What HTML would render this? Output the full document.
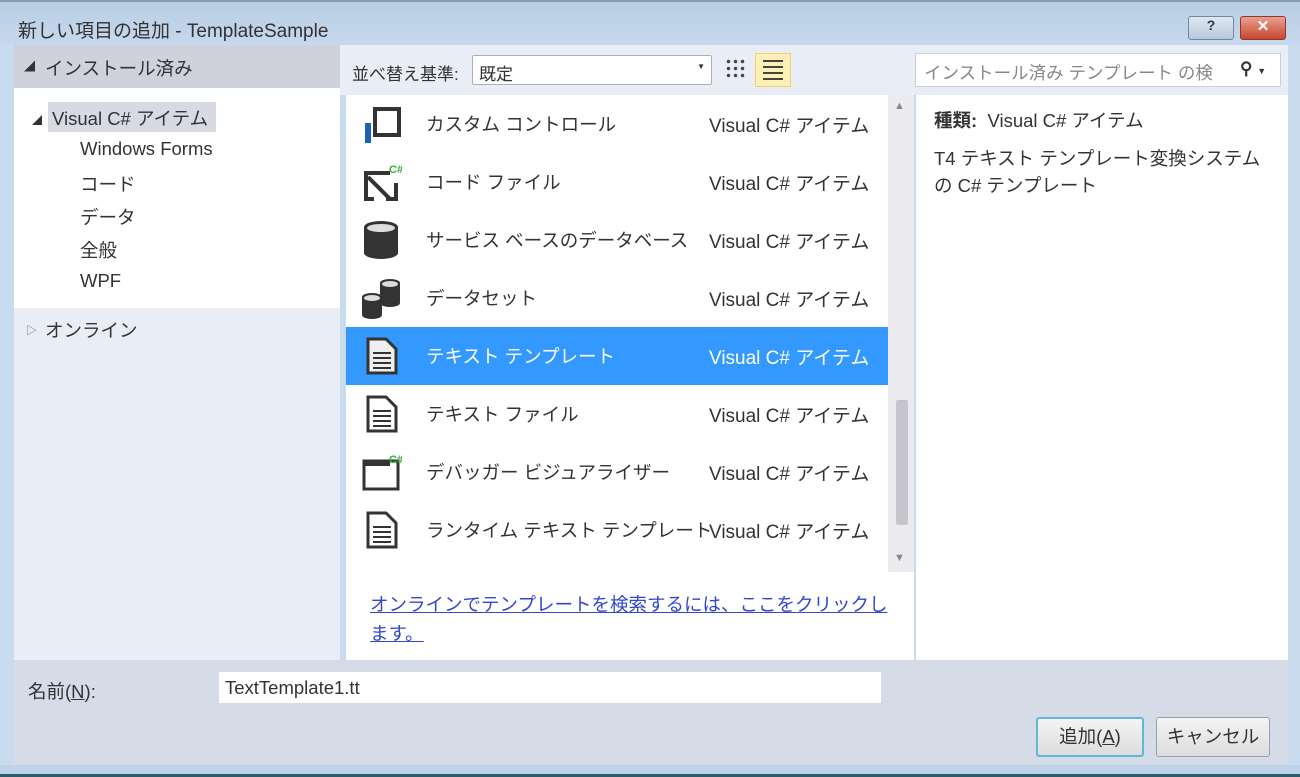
<!DOCTYPE html>
<html><head><meta charset="utf-8"><style>
*{margin:0;padding:0;box-sizing:border-box}
body{width:1300px;height:777px;overflow:hidden;background:#c9dbee;font-family:"Liberation Sans","Noto Sans CJK JP",sans-serif;font-size:18.5px;color:#333;position:relative}
.a{position:absolute}
.row{position:absolute;left:346px;width:542px;height:58px}
.row .n{position:absolute;left:80px;top:16px;white-space:nowrap}
.row .t{position:absolute;left:363px;top:16px;white-space:nowrap;font-size:19px}
.row svg{position:absolute;left:14px;top:8px}
.sel{background:#3399ff;color:#fff}
.tree{position:absolute;white-space:nowrap}
</style></head><body>
<div class="a" style="left:0;top:0;width:1300px;height:45px;background:linear-gradient(#b8cde4,#c6d8ec)"></div>
<div class="a" style="left:0;top:0;width:1300px;height:2px;background:#8a9aab"></div>
<div class="a" style="left:18px;top:16px;font-size:19px;color:#333">新しい項目の追加 - TemplateSample</div>
<div class="a" style="left:1188px;top:16px;width:46px;height:24px;border:1px solid #6f88a6;border-radius:3px;background:linear-gradient(#dfe8f2,#b7c8db);text-align:center;font-size:14px;font-weight:bold;color:#334">?</div>
<div class="a" style="left:1240px;top:16px;width:46px;height:24px;border:1px solid #8a3a30;border-radius:3px;background:linear-gradient(#e8a090,#c8462f);text-align:center;font-size:15px;font-weight:bold;color:#fff">✕</div>
<!-- left pane -->
<div class="a" style="left:14px;top:45px;width:326px;height:615px;background:#e9edf6"></div>
<div class="a" style="left:14px;top:45px;width:326px;height:43px;background:#cfd2dd"></div>
<div class="a" style="left:24px;top:58px;font-size:11px">◢</div>
<div class="a" style="left:45px;top:55px">インストール済み</div>
<div class="a" style="left:14px;top:88px;width:326px;height:220px;background:#fff"></div>
<div class="a" style="left:48px;top:102px;width:168px;height:30px;background:#d7d9e3"></div>
<div class="a" style="left:32px;top:112px;font-size:10px">◢</div>
<div class="tree" style="left:52px;top:105px">Visual C# アイテム</div>
<div class="tree" style="left:80px;top:138px">Windows Forms</div>
<div class="tree" style="left:80px;top:171px">コード</div>
<div class="tree" style="left:80px;top:204px">データ</div>
<div class="tree" style="left:80px;top:237px">全般</div>
<div class="tree" style="left:80px;top:270px">WPF</div>
<div class="a" style="left:26px;top:322px;font-size:11px;color:#777">▷</div>
<div class="tree" style="left:45px;top:317px">オンライン</div>
<!-- middle -->
<div class="a" style="left:340px;top:45px;width:576px;height:50px;background:#e9edf6"></div>
<div class="a" style="left:352px;top:60px;font-size:17px">並べ替え基準:</div>
<div class="a" style="left:472px;top:55px;width:240px;height:30px;background:#fff;border:1px solid #a8b0c0;border-radius:2px;padding:4px 6px;font-size:17px">既定<span style="position:absolute;right:6px;top:6px;font-size:8px">▼</span></div>
<div class="a" style="left:725px;top:58px;width:22px;height:22px;background:radial-gradient(circle,#444 1.5px,transparent 2px) 0 0/7px 7px"></div>
<div class="a" style="left:755px;top:53px;width:36px;height:34px;background:#fdf0b5;border:1px solid #f0d070"></div>
<div class="a" style="left:763px;top:60px;width:20px;height:20px;background:repeating-linear-gradient(#444 0 2px,transparent 2px 6px)"></div>
<div class="a" style="left:346px;top:95px;width:568px;height:565px;background:#fff"></div>
<div class="a" style="left:888px;top:95px;width:26px;height:477px;background:#ececf0"></div>
<div class="a" style="left:896px;top:400px;width:12px;height:125px;background:#c4c6cc;border-radius:2px"></div>
<div class="a" style="left:894px;top:100px;font-size:11px;color:#888">▲</div>
<div class="a" style="left:894px;top:552px;font-size:11px;color:#888">▼</div>

<div class="row" style="top:95px"><svg width="42" height="42"><rect x="15" y="6" width="24" height="26" fill="none" stroke="#333" stroke-width="4"/><rect x="5" y="20" width="6" height="20" fill="#1f5fb8"/></svg><span class="n">カスタム コントロール</span><span class="t">Visual C# アイテム</span></div>
<div class="row" style="top:153px"><svg width="42" height="42"><path d="M4 12h26M6 12v26h8M26 38h10v-16M8 16l22 22" fill="none" stroke="#333" stroke-width="4"/><text x="29" y="12" font-size="11" font-weight="bold" fill="#3a3">C#</text></svg><span class="n">コード ファイル</span><span class="t">Visual C# アイテム</span></div>
<div class="row" style="top:211px"><svg width="42" height="42"><path d="M4 8a17 6 0 0 1 34 0v26a17 6 0 0 1 -34 0z" fill="#333"/><ellipse cx="21" cy="9" rx="14" ry="4" fill="#ddd"/></svg><span class="n">サービス ベースのデータベース</span><span class="t">Visual C# アイテム</span></div>
<div class="row" style="top:269px"><svg width="42" height="42"><path d="M20 6a10 4 0 0 1 20 0v20a10 4 0 0 1 -20 0z" fill="#333"/><ellipse cx="30" cy="7" rx="8" ry="3" fill="#ddd"/><path d="M2 20a10 4 0 0 1 20 0v18a10 4 0 0 1 -20 0z" fill="#333"/><ellipse cx="12" cy="21" rx="8" ry="3" fill="#ddd"/></svg><span class="n">データセット</span><span class="t">Visual C# アイテム</span></div>
<div class="row sel" style="top:327px"><svg width="42" height="42"><path d="M8 4h18l10 10v24h-28z" fill="#eee" stroke="#333" stroke-width="3"/><path d="M13 18h18M13 23h18M13 28h18M13 33h18" stroke="#333" stroke-width="2"/></svg><span class="n">テキスト テンプレート</span><span class="t">Visual C# アイテム</span></div>
<div class="row" style="top:385px"><svg width="42" height="42"><path d="M8 4h18l10 10v24h-28z" fill="#fff" stroke="#333" stroke-width="3"/><path d="M13 18h18M13 23h18M13 28h18M13 33h18" stroke="#333" stroke-width="2"/></svg><span class="n">テキスト ファイル</span><span class="t">Visual C# アイテム</span></div>
<div class="row" style="top:443px"><svg width="42" height="42"><rect x="4" y="10" width="34" height="28" fill="none" stroke="#333" stroke-width="3"/><rect x="4" y="10" width="26" height="5" fill="#333"/><text x="29" y="12" font-size="11" font-weight="bold" fill="#3a3">C#</text></svg><span class="n">デバッガー ビジュアライザー</span><span class="t">Visual C# アイテム</span></div>
<div class="row" style="top:501px"><svg width="42" height="42"><path d="M8 4h18l10 10v24h-28z" fill="#fff" stroke="#333" stroke-width="3"/><path d="M13 18h18M13 23h18M13 28h18M13 33h18" stroke="#333" stroke-width="2"/></svg><span class="n">ランタイム テキスト テンプレート</span><span class="t">Visual C# アイテム</span></div>

<div class="a" style="left:370px;top:590px;width:530px;color:#3347cc;text-decoration:underline;line-height:29px">オンラインでテンプレートを検索するには、ここをクリックします。</div>
<!-- right -->
<div class="a" style="left:914px;top:45px;width:374px;height:50px;background:#e9edf6"></div>
<div class="a" style="left:916px;top:95px;width:372px;height:565px;background:#fff"></div>
<div class="a" style="left:915px;top:53px;width:366px;height:34px;background:#fff;border:1px solid #c8d0dc;padding:6px 8px;color:#888;font-size:17.5px;white-space:nowrap;overflow:hidden">インストール済み テンプレート の検</div>
<div class="a" style="left:1240px;top:59px;font-size:17px;font-weight:bold;color:#333;background:#fff">⚲ <span style="font-size:9px">▼</span></div>
<div class="a" style="left:934px;top:107px"><b>種類:</b>&nbsp; Visual C# アイテム</div>
<div class="a" style="left:934px;top:145px;line-height:27px">T4 テキスト テンプレート変換システム<br>の C# テンプレート</div>
<!-- bottom -->
<div class="a" style="left:14px;top:660px;width:1274px;height:105px;background:#d6dbe8"></div>
<div class="a" style="left:28px;top:678px">名前(<u>N</u>):</div>
<div class="a" style="left:219px;top:672px;width:662px;height:31px;background:#fff;padding:5px 6px">TextTemplate1.tt</div>
<div class="a" style="left:1036px;top:717px;width:108px;height:40px;border:2px solid #5fb8d8;border-radius:3px;background:linear-gradient(#f4f4f4,#dcdcdc);text-align:center;line-height:36px">追加(<u>A</u>)</div>
<div class="a" style="left:1156px;top:717px;width:114px;height:40px;border:1px solid #9aa0a8;border-radius:3px;background:linear-gradient(#f4f4f4,#dcdcdc);text-align:center;line-height:38px">キャンセル</div>
<div class="a" style="left:0;top:765px;width:1300px;height:12px;background:#bcd3ea"></div>
<div class="a" style="left:0;top:774px;width:1300px;height:3px;background:#2f5a6a"></div>
</body></html>
